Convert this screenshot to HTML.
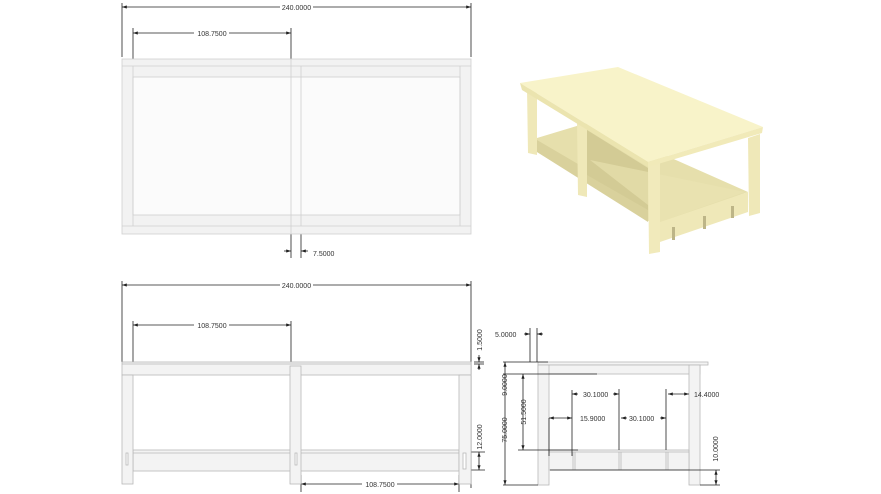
<!DOCTYPE html>
<html><head><meta charset="utf-8"><style>
html,body{margin:0;padding:0;background:#fff;width:881px;height:494px;overflow:hidden}
svg{display:block}
text{font-family:"Liberation Sans",sans-serif;font-size:7px;fill:#333}
</style></head><body>
<svg width="881" height="494" viewBox="0 0 881 494" xmlns="http://www.w3.org/2000/svg">
<defs>
<marker id="a" markerWidth="6" markerHeight="4" refX="6" refY="2" orient="auto-start-reverse"><path d="M0,0 L6,2 L0,4z" fill="#222"/></marker>
</defs>
<g stroke="#222" stroke-width="0.8" fill="none">
<line x1="122" y1="3" x2="122" y2="57"/><line x1="471" y1="3" x2="471" y2="57"/>
<line x1="122" y1="7" x2="280" y2="7" marker-start="url(#a)"/><line x1="313" y1="7" x2="471" y2="7" marker-end="url(#a)"/>
<line x1="133" y1="28" x2="133" y2="64"/><line x1="291" y1="28" x2="291" y2="64"/>
<line x1="133" y1="33" x2="194" y2="33" marker-start="url(#a)"/><line x1="229" y1="33" x2="291" y2="33" marker-end="url(#a)"/>
<line x1="291" y1="228" x2="291" y2="258"/><line x1="301" y1="228" x2="301" y2="258"/>
<line x1="284" y1="251" x2="291" y2="251" marker-end="url(#a)"/><line x1="308" y1="251" x2="301" y2="251" marker-end="url(#a)"/>
</g>
<text x="296.5" y="10" text-anchor="middle">240.0000</text>
<text x="212" y="36" text-anchor="middle">108.7500</text>
<text x="313" y="256">7.5000</text>
<g stroke="#cfcfcf" stroke-width="0.8">
<rect x="122" y="59" width="349" height="175" fill="#f2f2f2"/>
<rect x="133" y="77" width="327" height="138" fill="#fbfbfb"/>
<line x1="122" y1="66" x2="471" y2="66"/><line x1="122" y1="226" x2="471" y2="226"/>
<line x1="133" y1="66" x2="133" y2="226"/><line x1="460" y1="66" x2="460" y2="226"/>
<line x1="291" y1="59" x2="291" y2="234"/><line x1="301" y1="66" x2="301" y2="226"/>
</g>
<g stroke="#222" stroke-width="0.8" fill="none">
<line x1="122" y1="281" x2="122" y2="362"/><line x1="471" y1="281" x2="471" y2="362"/>
<line x1="122" y1="285" x2="280" y2="285" marker-start="url(#a)"/><line x1="313" y1="285" x2="471" y2="285" marker-end="url(#a)"/>
<line x1="133" y1="321" x2="133" y2="375"/><line x1="291" y1="321" x2="291" y2="375"/>
<line x1="133" y1="325" x2="194" y2="325" marker-start="url(#a)"/><line x1="229" y1="325" x2="291" y2="325" marker-end="url(#a)"/>
<line x1="301" y1="475" x2="301" y2="492"/><line x1="459" y1="475" x2="459" y2="492"/>
<line x1="301" y1="484" x2="362" y2="484" marker-start="url(#a)"/><line x1="397" y1="484" x2="459" y2="484" marker-end="url(#a)"/>
<line x1="471" y1="362" x2="471" y2="488"/>
<line x1="479" y1="355" x2="479" y2="362" marker-end="url(#a)"/><line x1="479" y1="370" x2="479" y2="364" marker-end="url(#a)"/>
<line x1="474" y1="362" x2="484" y2="362"/><line x1="474" y1="364" x2="484" y2="364"/>
<line x1="463" y1="452" x2="485" y2="452"/><line x1="463" y1="470" x2="485" y2="470"/>
<line x1="479" y1="452" x2="479" y2="470" marker-start="url(#a)" marker-end="url(#a)"/>
</g>
<text x="296.5" y="288" text-anchor="middle">240.0000</text>
<text x="212" y="328" text-anchor="middle">108.7500</text>
<text x="380" y="487" text-anchor="middle">108.7500</text>
<text transform="translate(482,340) rotate(-90)" text-anchor="middle">1.5000</text>
<text transform="translate(482,437) rotate(-90)" text-anchor="middle">12.0000</text>
<g stroke="#b8b8b8" stroke-width="0.8" fill="#f3f3f3">
<rect x="122" y="362" width="349" height="13"/>
<line x1="122" y1="364" x2="471" y2="364"/>
<rect x="133" y="450" width="326" height="21"/>
<line x1="133" y1="453" x2="459" y2="453"/>
<rect x="122" y="375" width="11" height="109"/>
<rect x="290" y="366" width="11" height="118"/>
<rect x="459" y="375" width="12" height="109"/>
<rect x="126" y="453" width="2" height="12" fill="#fff"/>
<rect x="295" y="453" width="2" height="12" fill="#fff"/>
<rect x="463" y="453" width="3" height="16" fill="#fff"/>
</g>
<g stroke="#b8b8b8" stroke-width="0.8" fill="#f3f3f3">
<rect x="538" y="362" width="170" height="3"/>
<rect x="538" y="365" width="162" height="9"/>
<rect x="538" y="365" width="11" height="120"/>
<rect x="689" y="365" width="11" height="120"/>
<rect x="549" y="450" width="140" height="20"/>
<line x1="549" y1="452" x2="689" y2="452"/>
<line x1="573" y1="452" x2="573" y2="470"/><line x1="575" y1="452" x2="575" y2="470"/>
<line x1="619" y1="452" x2="619" y2="470"/><line x1="621" y1="452" x2="621" y2="470"/>
<line x1="666" y1="452" x2="666" y2="470"/><line x1="668" y1="452" x2="668" y2="470"/>
</g>
<g stroke="#222" stroke-width="0.8" fill="none">
<line x1="530" y1="328" x2="530" y2="362"/><line x1="537" y1="328" x2="537" y2="362"/>
<line x1="524" y1="334" x2="530" y2="334" marker-end="url(#a)"/><line x1="543" y1="334" x2="537" y2="334" marker-end="url(#a)"/>
<line x1="503" y1="362" x2="548" y2="362"/>
<line x1="503" y1="374" x2="597" y2="374"/>
<line x1="518" y1="450" x2="578" y2="450"/>
<line x1="503" y1="485" x2="538" y2="485"/>
<line x1="550" y1="470" x2="720" y2="470"/>
<line x1="700" y1="485" x2="720" y2="485"/>
<line x1="505" y1="362" x2="505" y2="485" marker-start="url(#a)" marker-end="url(#a)"/>
<line x1="523" y1="374" x2="523" y2="450" marker-start="url(#a)" marker-end="url(#a)"/>
<line x1="716" y1="470" x2="716" y2="485" marker-start="url(#a)" marker-end="url(#a)"/>
<line x1="549" y1="418" x2="549" y2="456"/><line x1="572" y1="390" x2="572" y2="456"/>
<line x1="549" y1="418" x2="572" y2="418" marker-start="url(#a)" marker-end="url(#a)"/>
<line x1="619" y1="389" x2="619" y2="450"/>
<line x1="572" y1="394" x2="578" y2="394" marker-start="url(#a)"/><line x1="613" y1="394" x2="619" y2="394" marker-end="url(#a)"/>
<line x1="666" y1="389" x2="666" y2="450"/>
<line x1="621" y1="418" x2="627" y2="418" marker-start="url(#a)"/><line x1="660" y1="418" x2="666" y2="418" marker-end="url(#a)"/>
<line x1="668" y1="394" x2="689" y2="394" marker-start="url(#a)" marker-end="url(#a)"/>
</g>
<text x="495" y="337">5.0000</text>
<text x="583" y="397">30.1000</text>
<text x="580" y="421">15.9000</text>
<text x="629" y="421">30.1000</text>
<text x="694" y="397">14.4000</text>
<text transform="translate(507,385) rotate(-90)" text-anchor="middle">9.0000</text>
<text transform="translate(507,430) rotate(-90)" text-anchor="middle">75.0000</text>
<text transform="translate(526,412) rotate(-90)" text-anchor="middle">51.5000</text>
<text transform="translate(718,449) rotate(-90)" text-anchor="middle">10.0000</text>
<!-- 3D TABLE -->
<g>
<polygon points="537,138 590,122 748,192 660,224 648,221 537,152" fill="#e6dfac"/>
<polygon points="537,140 648,205 648,222 537,152" fill="#d9d19c"/>
<polygon points="587,130 648,168 648,210 587,175" fill="#d3cb95"/>
<polygon points="590,160 745,192 660,222 648,205" fill="#ebe4b2" opacity="0.6"/>
<polygon points="660,222 748,192 748,212 660,242" fill="#efe8b8"/>
<rect x="672" y="227" width="3" height="13" fill="#bdb587"/>
<rect x="703" y="216" width="3" height="13" fill="#bdb587"/>
<rect x="731" y="206" width="3" height="12" fill="#bdb587"/>
<polygon points="527,88 537,91 537,155 528,153" fill="#efe8b8"/>
<polygon points="577,122 587,125 587,197 578,195" fill="#efe8b8"/>
<polygon points="748,138 760,134 760,213 749,216" fill="#efe8b8"/>
<polygon points="648,163 660,160 660,252 649,254" fill="#f1eabb"/>
<polygon points="520,83 618,67 763,127 648,162" fill="#f8f3c9"/>
<polygon points="520,83 648,162 648,167 522,90" fill="#ebe4af"/>
<polygon points="648,162 763,127 762,133 648,167" fill="#f1eab9"/>
</g>
</svg>
</body></html>
